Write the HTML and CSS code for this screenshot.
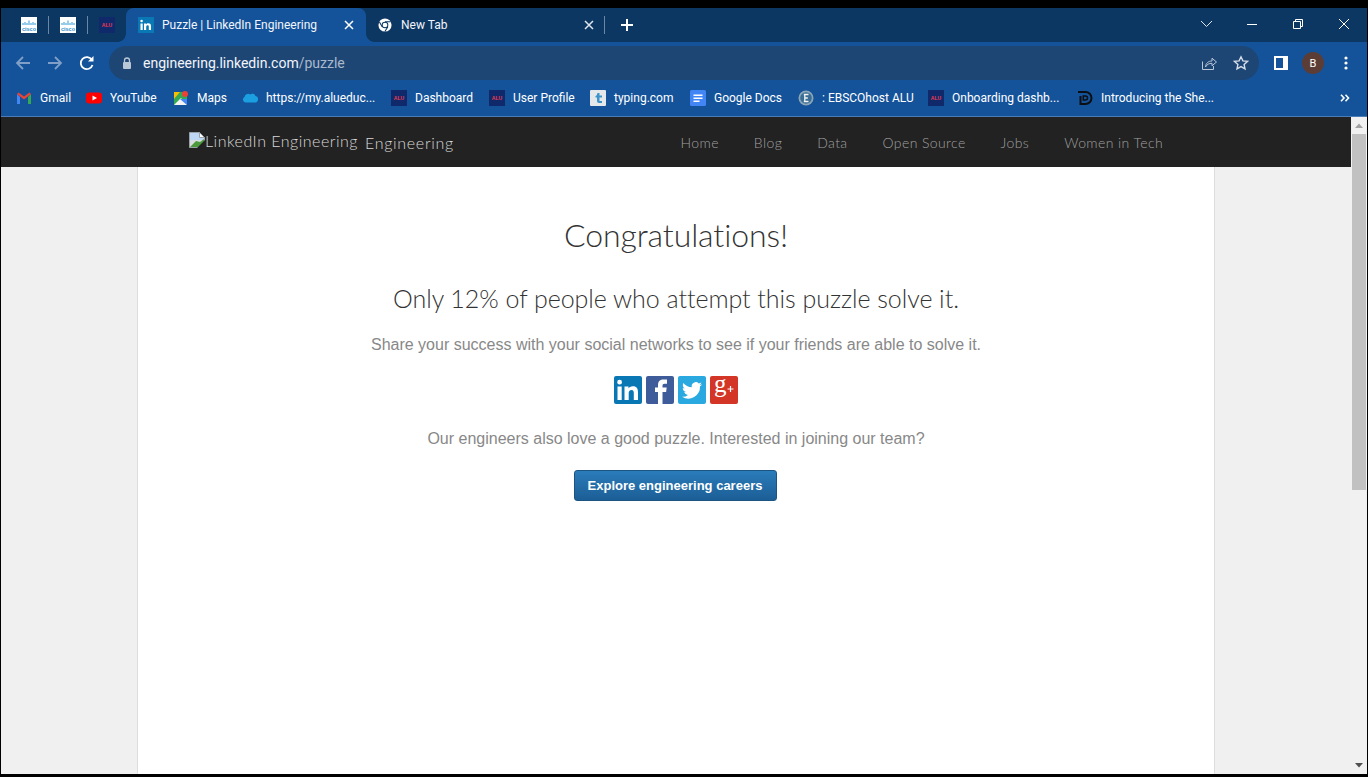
FILE: index.html
```html
<!DOCTYPE html>
<html lang="en">
<head>
    <meta charset="UTF-8">
    <meta name="viewport" content="width=device-width, initial-scale=1.0">
    <title>Puzzle | LinkedIn Engineering</title>
    <link rel="stylesheet" href="styles.css">
</head>
<body>
<div class="window">
    <!-- Tab strip -->
    <div class="tabstrip">
        <div class="pinned">
            <span class="pin"><svg width="16" height="16" viewBox="0 0 16 16"><rect width="16" height="16" fill="#fff"/><path d="M2 6v2M4 5v3M6 6v2M8 3.500v4.500M10 6v2M12 5v3M14 6v2" stroke="#2f9ad6" stroke-width="1"/><text x="8" y="13.500" class="fav-cisco">cisco</text></svg></span>
            <span class="tab-sep"></span>
            <span class="pin"><svg width="16" height="16" viewBox="0 0 16 16"><rect width="16" height="16" fill="#fff"/><path d="M2 6v2M4 5v3M6 6v2M8 3.500v4.500M10 6v2M12 5v3M14 6v2" stroke="#2f9ad6" stroke-width="1"/><text x="8" y="13.500" class="fav-cisco">cisco</text></svg></span>
            <span class="tab-sep"></span>
            <span class="pin"><svg width="16" height="16" viewBox="0 0 16 16"><rect width="16" height="16" fill="#10296b"/><text x="8" y="9.500" class="fav-alu">ALU</text></svg></span>
        </div>
        <div class="tab tab-active">
            <svg class="favicon" width="16" height="16" viewBox="0 0 16 16"><rect width="16" height="16" fill="#0a78b5"/><path d="M2.500 6.500h2.200V13H2.500zM3.600 2.800a1.200 1.200 0 1 1 0 2.500 1.200 1.200 0 0 1 0-2.500zM6 6.500h2.100v.9c.4-.6 1.100-1.100 2.200-1.100 2 0 2.700 1.200 2.700 3.200V13h-2.200V9.900c0-1-.2-1.700-1.100-1.700-1 0-1.500.7-1.500 1.700V13H6z" fill="#fff"/></svg>
            <span class="tab-title">Puzzle | LinkedIn Engineering</span>
            <svg class="tab-close" width="10" height="10" viewBox="0 0 10 10"><path d="M1 1l8 8M9 1l-8 8" stroke="#fff" stroke-width="1.500"/></svg>
        </div>
        <div class="tab tab-idle">
            <svg class="favicon" width="14" height="14" viewBox="0 0 16 16"><circle cx="8" cy="8" r="7.500" fill="#fff"/><circle cx="8" cy="8" r="3.800" fill="#0d3763"/><circle cx="8" cy="8" r="2.700" fill="#fff"/><path d="M8 4.200h6.500M4.700 9.900L1.500 4.300M11.300 10l-3.400 5.500" stroke="#0d3763" stroke-width="1.200"/></svg>
            <span class="tab-title">New Tab</span>
            <svg class="tab-close" width="10" height="10" viewBox="0 0 10 10"><path d="M1 1l8 8M9 1l-8 8" stroke="#dfe6ee" stroke-width="1.500"/></svg>
        </div>
        <span class="tab-sep"></span>
        <svg class="new-tab" width="14" height="14" viewBox="0 0 14 14"><path d="M7 1v12M1 7h12" stroke="#fff" stroke-width="2"/></svg>
        <div class="win-controls">
            <svg width="46" height="12" viewBox="0 0 46 12"><path d="M18 3l5.500 5.500L29 3" fill="none" stroke="#dfe6ee" stroke-width="1"/></svg>
            <svg width="46" height="12" viewBox="0 0 46 12"><path d="M18 6.500h10" stroke="#fff" stroke-width="1"/></svg>
            <svg width="46" height="12" viewBox="0 0 46 12"><path d="M18.500 3.500h7v7h-7zM20.500 3.500v-2h7v7h-2" fill="none" stroke="#fff" stroke-width="1"/></svg>
            <svg width="46" height="12" viewBox="0 0 46 12"><path d="M18 1l10 10M28 1L18 11" stroke="#fff" stroke-width="1"/></svg>
        </div>
    </div>

    <!-- Toolbar -->
    <div class="toolbar">
        <div class="nav-group">
            <svg width="16" height="16" viewBox="0 0 16 16"><path d="M15 8H2M8 2L2 8l6 6" fill="none" stroke="#7f9fc8" stroke-width="1.800"/></svg>
            <svg width="16" height="16" viewBox="0 0 16 16"><path d="M1 8h13M8 2l6 6-6 6" fill="none" stroke="#7f9fc8" stroke-width="1.800"/></svg>
            <svg width="16" height="16" viewBox="0 0 16 16"><path d="M13.500 10a6 6 0 1 1-.6-5" fill="none" stroke="#fff" stroke-width="1.800"/><path d="M14.500 1v5.500H9z" fill="#fff"/></svg>
        </div>
        <div class="omnibox">
            <svg class="lock" width="10" height="13" viewBox="0 0 10 13"><path d="M2.500 5V3.500a2.500 2.500 0 0 1 5 0V5" fill="none" stroke="#b9c6d6" stroke-width="1.300"/><rect x="1" y="5" width="8" height="7" rx="1" fill="#b9c6d6"/></svg>
            <span class="url">engineering.linkedin.com<span class="url-path">/puzzle</span></span>
            <svg class="omni-icon" width="16" height="16" viewBox="0 0 16 16"><path d="M1.500 6.500v8h11V11" fill="none" stroke="#b9c6d6" stroke-width="1"/><path d="M4.500 12c.3-4 3-6 6.500-6V3.200L15.500 7 11 10.800V8.300c-3 0-5 1-6.500 3.700z" fill="none" stroke="#b9c6d6" stroke-width="1"/></svg>
            <svg class="omni-icon" width="16" height="16" viewBox="0 0 16 16"><path d="M8 1.800l1.900 4.100 4.500.5-3.300 3 .9 4.500L8 11.600l-4 2.300.9-4.500-3.300-3 4.500-.5z" fill="none" stroke="#d5dde8" stroke-width="1.400"/></svg>
        </div>
        <svg class="side-panel" width="14" height="14" viewBox="0 0 14 14"><rect width="14" height="14" fill="#fff"/><rect x="2" y="2" width="7" height="10" fill="#14539a"/></svg>
        <span class="avatar">B</span>
        <svg class="menu-dots" width="4" height="14" viewBox="0 0 4 14"><circle cx="2" cy="2" r="1.600" fill="#fff"/><circle cx="2" cy="7" r="1.600" fill="#fff"/><circle cx="2" cy="12" r="1.600" fill="#fff"/></svg>
    </div>

    <!-- Bookmarks bar -->
    <div class="bookmarks">
        <div class="bookmark"><svg width="16" height="16" viewBox="0 0 16 16"><path d="M1 4v10h3V7z" fill="#4285f4"/><path d="M15 4v10h-3V7z" fill="#34a853"/><path d="M1 4l7 5.500L15 4 13.500 2.500 8 6.500 2.500 2.500z" fill="#ea4335"/></svg><span>Gmail</span></div>
        <div class="bookmark"><svg width="16" height="16" viewBox="0 0 16 16"><rect y="2.500" width="16" height="11" rx="3" fill="#f00"/><path d="M6.500 5.500v5L11 8z" fill="#fff"/></svg><span>YouTube</span></div>
        <div class="bookmark"><svg width="16" height="16" viewBox="0 0 16 16"><rect x="1" y="2" width="13" height="13" fill="#35a853"/><path d="M1 15l7-7 6 7z" fill="#f3f3f3"/><path d="M1 2h6L1 9z" fill="#fbbc04"/><path d="M7 9l7 6V9z" fill="#4285f4"/><circle cx="12" cy="4" r="3" fill="#ea4335"/></svg><span>Maps</span></div>
        <div class="bookmark"><svg width="16" height="16" viewBox="0 0 16 16"><path d="M3.500 12.500a3 3 0 0 1-1-5.600A3.500 3.500 0 0 1 8 4.500a3.500 3.500 0 0 1 5.500 1.500 3.300 3.300 0 0 1-1 6.500z" fill="#1b9fe0"/></svg><span>https://my.alueduc...</span></div>
        <div class="bookmark"><svg width="16" height="16" viewBox="0 0 16 16"><rect width="16" height="16" fill="#10296b"/><text x="8" y="9.500" class="fav-alu">ALU</text></svg><span>Dashboard</span></div>
        <div class="bookmark"><svg width="16" height="16" viewBox="0 0 16 16"><rect width="16" height="16" fill="#10296b"/><text x="8" y="9.500" class="fav-alu">ALU</text></svg><span>User Profile</span></div>
        <div class="bookmark"><svg width="16" height="16" viewBox="0 0 16 16"><rect width="16" height="16" rx="1" fill="#e4e8ea"/><path d="M7.500 3h2v2.500H12v2H9.500V11H12v2H9a2 2 0 0 1-2-2V7.500H5.500v-1.500c1 0 1.800-1.500 2-3z" fill="#3b93c9"/></svg><span>typing.com</span></div>
        <div class="bookmark"><svg width="16" height="16" viewBox="0 0 16 16"><rect width="16" height="16" rx="1.500" fill="#4285f4"/><path d="M3.500 4.500h9v1.500h-9zM3.500 7.500h9V9h-9zM3.500 10.500h6V12h-6z" fill="#fff"/></svg><span>Google Docs</span></div>
        <div class="bookmark"><svg width="16" height="16" viewBox="0 0 16 16"><circle cx="8" cy="8" r="7.500" fill="#8aa6b8"/><circle cx="8" cy="8" r="5.800" fill="#3a6d94"/><path d="M5.800 4.500h4.700M6.800 4.500v7M5.800 11.500h4.700M6.800 8h3" stroke="#f2f4f6" stroke-width="1.300" fill="none"/></svg><span>: EBSCOhost ALU</span></div>
        <div class="bookmark"><svg width="16" height="16" viewBox="0 0 16 16"><rect width="16" height="16" fill="#10296b"/><text x="8" y="9.500" class="fav-alu">ALU</text></svg><span>Onboarding dashb...</span></div>
        <div class="bookmark"><svg width="16" height="16" viewBox="0 0 16 16"><path d="M1 2h7.500a6 6 0 0 1 0 12H3.500V6" fill="none" stroke="#0b0f14" stroke-width="2"/><path d="M6.300 6v4h2.200a2 2 0 0 0 0-4z" fill="none" stroke="#0b0f14" stroke-width="1.500"/></svg><span>Introducing the She...</span></div>
        <svg class="more" width="10" height="8" viewBox="0 0 10 8"><path d="M1 .8L4 4 1 7.200M5.500.8L8.500 4 5.500 7.200" fill="none" stroke="#fff" stroke-width="1.600"/></svg>
    </div>

    <!-- Page viewport -->
    <div class="viewport">
        <div class="page">
            <nav class="site-nav">
                <div class="logo">
                    <svg class="broken-img" width="16" height="16" viewBox="0 0 16 16"><path d="M.5.500h10l5 5v10H.500z" fill="#d9dde2" stroke="#9aa0a6"/><path d="M1 1h9v5h5v2l-14 0z" fill="#bcd6f4"/><path d="M1 15l6-6 4 1 4-3v8z" fill="#4d9a3c"/><path d="M10.500.500v5h5z" fill="#fff" stroke="#9aa0a6"/><path d="M8 16L16 8v8z" fill="#222"/></svg>
                    <span class="logo-alt">LinkedIn Engineering</span>
                    <span class="logo-text">Engineering</span>
                </div>
                <ul class="nav-links">
                    <li><a href="#">Home</a></li>
                    <li><a href="#">Blog</a></li>
                    <li><a href="#">Data</a></li>
                    <li><a href="#">Open Source</a></li>
                    <li><a href="#">Jobs</a></li>
                    <li><a href="#">Women in Tech</a></li>
                </ul>
            </nav>
            <main class="content">
                <h1>Congratulations!</h1>
                <h2>Only 12% of people who attempt this puzzle solve it.</h2>
                <p class="share-text">Share your success with your social networks to see if your friends are able to solve it.</p>
                <div class="social">
                    <svg width="28" height="28" viewBox="0 0 28 28"><rect width="28" height="28" rx="2" fill="#0a77b5"/><path d="M3.500 10.500h4.200V24H3.500zM5.600 3.800a2.400 2.400 0 1 1 0 4.800 2.400 2.400 0 0 1 0-4.800zM10.500 10.500h4v1.900c.7-1.200 2.200-2.200 4.300-2.200 4.200 0 5.200 2.700 5.200 6.300V24h-4.200v-6.700c0-1.800-.3-3.400-2.300-3.400s-2.800 1.500-2.800 3.300V24h-4.200z" fill="#fff"/></svg>
                    <svg width="28" height="28" viewBox="0 0 28 28"><rect width="28" height="28" rx="2" fill="#3f5c9a"/><path d="M12 28V16H9v-4.500h3V9c0-3.800 2.300-5.500 5.400-5.500H21v4.200h-2.300c-1.700 0-2.200.8-2.200 2.100v1.700h4.200l-.6 4.500h-3.600v12z" fill="#fff"/></svg>
                    <svg width="28" height="28" viewBox="0 0 28 28"><rect width="28" height="28" rx="2" fill="#2aa9e0"/><path d="M24 8.200c-.8.300-1.500.5-2.400.6.900-.5 1.500-1.300 1.800-2.300-.8.500-1.700.8-2.600 1a4.100 4.100 0 0 0-7 3.700c-3.400-.2-6.400-1.800-8.400-4.300-1.100 1.900-.5 4.300 1.300 5.500-.7 0-1.300-.2-1.900-.5 0 2 1.400 3.700 3.300 4.100-.6.200-1.200.2-1.900.1.500 1.600 2 2.800 3.800 2.800A8.300 8.300 0 0 1 4 20.700 11.700 11.700 0 0 0 22 10.300c.8-.6 1.500-1.300 2-2.100z" fill="#fff"/></svg>
                    <svg class="gplus-icon" width="28" height="28" viewBox="0 0 28 28"><rect width="28" height="28" rx="2" fill="#d33526"/><text x="4" y="16" class="gplus">g</text><path d="M17.500 13h6M20.500 10v6" stroke="#fff" stroke-width="1.200"/></svg>
                </div>
                <p class="join-text">Our engineers also love a good puzzle. Interested in joining our team?</p>
                <a href="#" class="careers-btn">Explore engineering careers</a>
            </main>
        </div>
        <div class="scrollbar">
            <svg width="16" height="17" viewBox="0 0 16 17"><path d="M4 11l4-4.500 4 4.500z" fill="#a3a3a3"/></svg>
            <div class="scroll-track"><div class="scroll-thumb"></div></div>
            <svg width="16" height="17" viewBox="0 0 16 17"><path d="M4 6l4 4.500L12 6z" fill="#505050"/></svg>
        </div>
    </div>
</div>
</body>
</html>
```

FILE: styles.css
```css
* {
    box-sizing: border-box;
}

html, body {
    height: 100%;
    margin: 0;
    overflow: hidden;
}

body {
    background-color: #000;
}

.window {
    height: 777px;
    padding: 8px 1px 3px 1px;
    display: flex;
    flex-direction: column;
    font-family: 'Roboto', 'Open Sans', sans-serif;
}

/* Small text inside favicons */
.fav-cisco {
    font-family: 'Liberation Sans', sans-serif;
    font-size: 5.500px;
    font-weight: bold;
    fill: #2f8fca;
    text-anchor: middle;
}

.fav-alu {
    font-family: 'Liberation Sans', sans-serif;
    font-size: 5px;
    font-weight: bold;
    fill: #ef3a50;
    text-anchor: middle;
}

/* Tab strip */
.tabstrip {
    height: 34px;
    background-color: #0d3763;
    display: flex;
    align-items: stretch;
    color: #fff;
    font-size: 12px;
    flex-shrink: 0;
}

.pinned {
    width: 125px;
    display: flex;
    align-items: center;
    padding-left: 20px;
    gap: 11px;
}

.pin {
    display: flex;
}

.tab-sep {
    width: 1px;
    height: 18px;
    align-self: center;
    background-color: #6b87a6;
}

.tab {
    width: 240px;
    display: flex;
    align-items: center;
    padding: 0 12px;
    border-radius: 8px 8px 0 0;
}

.tab-active {
    position: relative;
    background-color: #14539a;
}

/* Flares at the bottom corners of the active tab */
.tab-active::before,
.tab-active::after {
    content: "";
    position: absolute;
    bottom: 0;
    width: 8px;
    height: 8px;
}

.tab-active::before {
    left: -8px;
    background: radial-gradient(circle at 0 0, transparent 7.500px, #14539a 8px);
}

.tab-active::after {
    right: -8px;
    background: radial-gradient(circle at 100% 0, transparent 7.500px, #14539a 8px);
}

.tab .favicon {
    margin-right: 8px;
}

.tab-idle {
    width: 238px;
    padding-right: 10px;
}

.tab-idle .favicon {
    margin-right: 9px;
}

.tab-title {
    flex: 1;
    color: #f2f5f9;
}

.new-tab {
    align-self: center;
    margin-left: 15px;
}

.win-controls {
    margin-left: auto;
    display: flex;
    align-items: center;
    padding-bottom: 2px;
}

/* Toolbar */
.toolbar {
    height: 38px;
    background-color: #14539a;
    display: flex;
    align-items: center;
    padding: 4px 0 0 14px;
    flex-shrink: 0;
}

.nav-group {
    display: flex;
    gap: 16px;
}

.omnibox {
    width: 1150px;
    height: 34px;
    margin-left: 14px;
    border-radius: 17px;
    background-color: #1e4675;
    display: flex;
    align-items: center;
    padding: 0 10px 0 13px;
    flex-shrink: 0;
}

.lock {
    margin-right: 11px;
}

.url {
    flex: 1;
    color: #f2f5f9;
    font-size: 14px;
}

.url-path {
    color: #a9b9cc;
}

.omni-icon {
    margin-left: 16px;
}

.side-panel {
    margin-left: 15px;
}

.avatar {
    width: 22px;
    height: 22px;
    margin-left: 14px;
    border-radius: 50%;
    background-color: #5c3d35;
    color: #fff;
    font-size: 11px;
    display: flex;
    align-items: center;
    justify-content: center;
}

.menu-dots {
    margin-left: 20px;
}

/* Bookmarks */
.bookmarks {
    height: 37px;
    background-color: #14539a;
    border-bottom: 1px solid #4a7db8;
    display: flex;
    align-items: center;
    padding: 0 0 1px 15px;
    color: #fff;
    font-size: 12px;
    flex-shrink: 0;
}

.bookmark {
    display: flex;
    align-items: center;
    gap: 8px;
    white-space: nowrap;
}

.bookmark:nth-child(1) { width: 70px; }
.bookmark:nth-child(2) { width: 87px; }
.bookmark:nth-child(3) { width: 69px; }
.bookmark:nth-child(4) { width: 149px; }
.bookmark:nth-child(5) { width: 98px; }
.bookmark:nth-child(6) { width: 101px; }
.bookmark:nth-child(7) { width: 100px; }
.bookmark:nth-child(8) { width: 108px; }
.bookmark:nth-child(9) { width: 130px; }
.bookmark:nth-child(10) { width: 149px; }
.bookmark:nth-child(11) { width: 263px; }

/* Page */
.viewport {
    flex: 1;
    display: flex;
    min-height: 0;
}

.page {
    flex: 1;
    background-color: #f0f0f0;
    display: flex;
    flex-direction: column;
    min-width: 0;
}

.site-nav {
    height: 50px;
    background-color: #222;
    display: flex;
    align-items: center;
    padding: 0 188px 0 188px;
    font-family: 'Lato', sans-serif;
    flex-shrink: 0;
}

.logo {
    display: flex;
    align-items: center;
    color: #d8d8d8;
    font-size: 16px;
    font-weight: 300;
}

.broken-img {
    margin-bottom: 4px;
}

.logo-alt {
    margin-bottom: 4px;
    letter-spacing: .5px;
}

.logo-text {
    margin-left: 7px;
    letter-spacing: .7px;
}

.nav-links {
    list-style: none;
    margin: 0 0 2px auto;
    padding: 0;
    display: flex;
    gap: 35px;
}

.nav-links a {
    color: #a0a0a0;
    font-size: 14px;
    font-weight: 300;
    letter-spacing: .4px;
    text-decoration: none;
}

.content {
    flex: 1;
    width: 1078px;
    margin-left: 136px;
    background-color: #fff;
    border-left: 1px solid #ddd;
    border-right: 1px solid #ddd;
    text-align: center;
    font-family: 'Liberation Sans', Arial, sans-serif;
    display: flex;
    flex-direction: column;
    align-items: center;
}

.content h1 {
    font-family: 'Lato', sans-serif;
    font-weight: 300;
    font-size: 32px;
    line-height: 40px;
    letter-spacing: -.1px;
    color: #333;
    margin: 48px 0 0 0;
}

.content h2 {
    font-family: 'Lato', sans-serif;
    font-weight: 300;
    font-size: 25px;
    line-height: 30px;
    letter-spacing: -.04px;
    color: #333;
    margin: 28px 0 0 0;
}

.share-text, .join-text {
    color: #888;
    font-size: 16px;
    line-height: 22px;
    margin: 0;
}

.share-text {
    margin-top: 21px;
}

.social {
    display: flex;
    gap: 4px;
    margin-top: 20px;
}

.gplus-icon {
    overflow: visible;
}

.gplus {
    font-family: 'Liberation Serif', serif;
    font-size: 25px;
    fill: #fff;
}

.join-text {
    margin-top: 24px;
}

.careers-btn {
    display: block;
    width: 203px;
    height: 31px;
    margin: 20px 2px 0 0;
    border: 1px solid #1b5480;
    border-radius: 3px;
    background: linear-gradient(#2a7cba, #1c5e96);
    color: #fff;
    font-size: 13px;
    font-weight: bold;
    line-height: 29px;
    text-decoration: none;
}

/* Scrollbar */
.scrollbar {
    width: 16px;
    background-color: #f1f1f1;
    display: flex;
    flex-direction: column;
    flex-shrink: 0;
}

.scroll-track {
    flex: 1;
    padding: 0 1px;
}

.scroll-thumb {
    height: 356px;
    background-color: #c1c1c1;
}
```
